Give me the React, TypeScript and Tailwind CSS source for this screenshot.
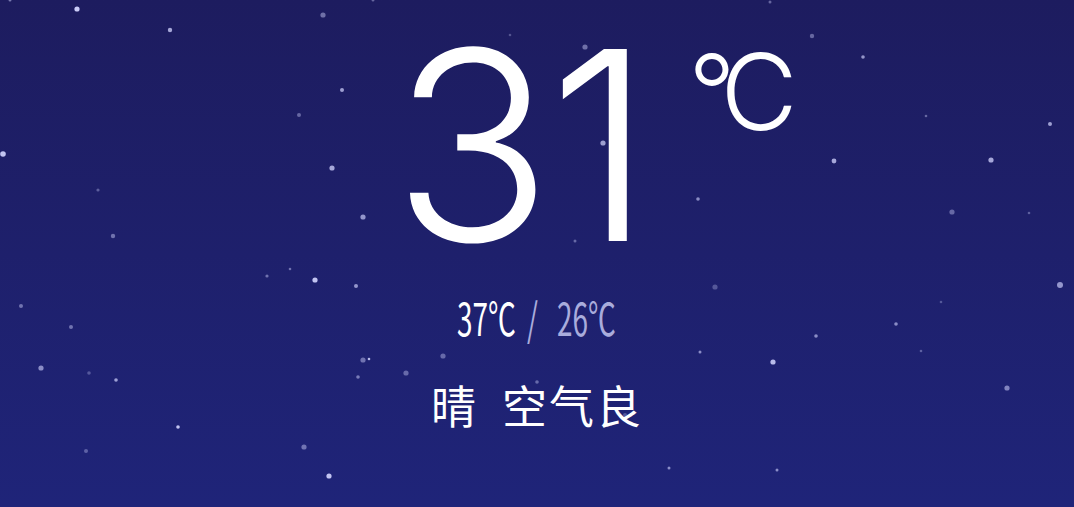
const stars: [number, number, number, number][] = [
  [10, 0, 1.5, 0.5], [77, 9, 2.6, 0.95], [170, 30, 2.2, 0.75], [323, 15, 2.6, 0.45],
  [342, 90, 2, 0.7], [299, 115, 2, 0.4], [3, 154, 2.8, 0.9], [332, 168, 2.6, 0.75],
  [98, 190, 1.6, 0.35], [363, 217, 2.6, 0.65], [113, 236, 2.2, 0.45], [373, 0, 1.5, 0.4],
  [21, 306, 2, 0.45], [71, 327, 2, 0.45], [41, 368, 2.6, 0.6], [89, 373, 1.8, 0.3],
  [116, 380, 1.8, 0.7], [267, 276, 1.6, 0.45], [290, 269, 1.3, 0.45], [315, 280, 2.6, 0.9],
  [356, 286, 2, 0.65], [363, 360, 2.6, 0.45], [369, 359, 1.3, 0.85], [358, 377, 1.8, 0.5],
  [178, 427, 1.8, 0.9], [86, 451, 2, 0.35], [304, 447, 2.6, 0.45], [329, 476, 2.6, 0.9],
  [770, 2, 1.5, 0.4], [812, 36, 2.2, 0.4], [863, 57, 1.8, 0.65], [926, 116, 1.3, 0.4],
  [1050, 124, 2, 0.7], [834, 161, 2.4, 0.75], [991, 160, 2.6, 0.75], [698, 199, 1.8, 0.6],
  [952, 212, 2.6, 0.4], [1029, 213, 1.3, 0.35], [715, 287, 2.6, 0.3], [1060, 285, 3, 0.65],
  [941, 302, 1.3, 0.3], [896, 324, 1.8, 0.6], [816, 336, 1.8, 0.6], [700, 352, 1.5, 0.6],
  [773, 362, 2.6, 0.85], [921, 351, 1.3, 0.35], [1007, 388, 2.6, 0.55], [777, 470, 1.5, 0.6],
  [585, 47, 2.6, 0.45], [603, 143, 2.6, 0.7], [575, 241, 1.5, 0.4], [510, 35, 1.3, 0.3],
  [443, 356, 2.6, 0.4], [406, 373, 2.6, 0.4], [537, 382, 1.8, 0.4], [669, 468, 1.5, 0.6],
  [625, 415, 2, 0.3],
];

export default function App() {
  return (
    <div className="relative w-[1074px] h-[507px] overflow-hidden bg-gradient-to-b from-[#1d1c5f] to-[#1f2479]">
      <svg className="absolute inset-0" width="1074" height="507" viewBox="0 0 1074 507">
        {stars.map(([x, y, r, o], i) => (
          <circle key={i} cx={x} cy={y} r={r} fill="#d4d6ff" opacity={o} />
        ))}
      </svg>
      <div className="relative flex flex-col items-center text-white">
        <div className="flex items-start pl-[116px] mt-[13px]">
          <span className="font-['Inter',sans-serif] font-[260] text-[264px] leading-none tracking-[-4px]">31</span>
          <span className="ml-[40px] mt-[26px] font-['Inter',sans-serif] font-[350] text-[104px] leading-none">°</span>
          <span className="-ml-[15px] mt-[26px] font-['Inter',sans-serif] font-[350] text-[106px] leading-none">C</span>
        </div>
        <div className="flex items-center mt-[17px] pr-[4px] h-[45px] font-['Noto_Sans_CJK_SC',sans-serif] font-normal text-[45px] leading-none">
          <div className="w-[56px] whitespace-nowrap">
            <span className="inline-block origin-left scale-x-[0.62]">37℃</span>
          </div>
          <div className="w-[8px] ml-[14px] whitespace-nowrap text-[#a9acdc]">
            <span className="inline-block origin-left scale-x-[0.62]">/</span>
          </div>
          <div className="w-[56px] ml-[22px] whitespace-nowrap text-[#a9acdc]">
            <span className="inline-block origin-left scale-x-[0.62]">26℃</span>
          </div>
        </div>
        <div className="flex items-center mt-[43px] font-['Noto_Sans_CJK_SC',sans-serif] font-normal text-[45px] leading-none tracking-[2px]">
          <span>晴</span>
          <span className="ml-[24px]">空气良</span>
        </div>
      </div>
    </div>
  );
}
